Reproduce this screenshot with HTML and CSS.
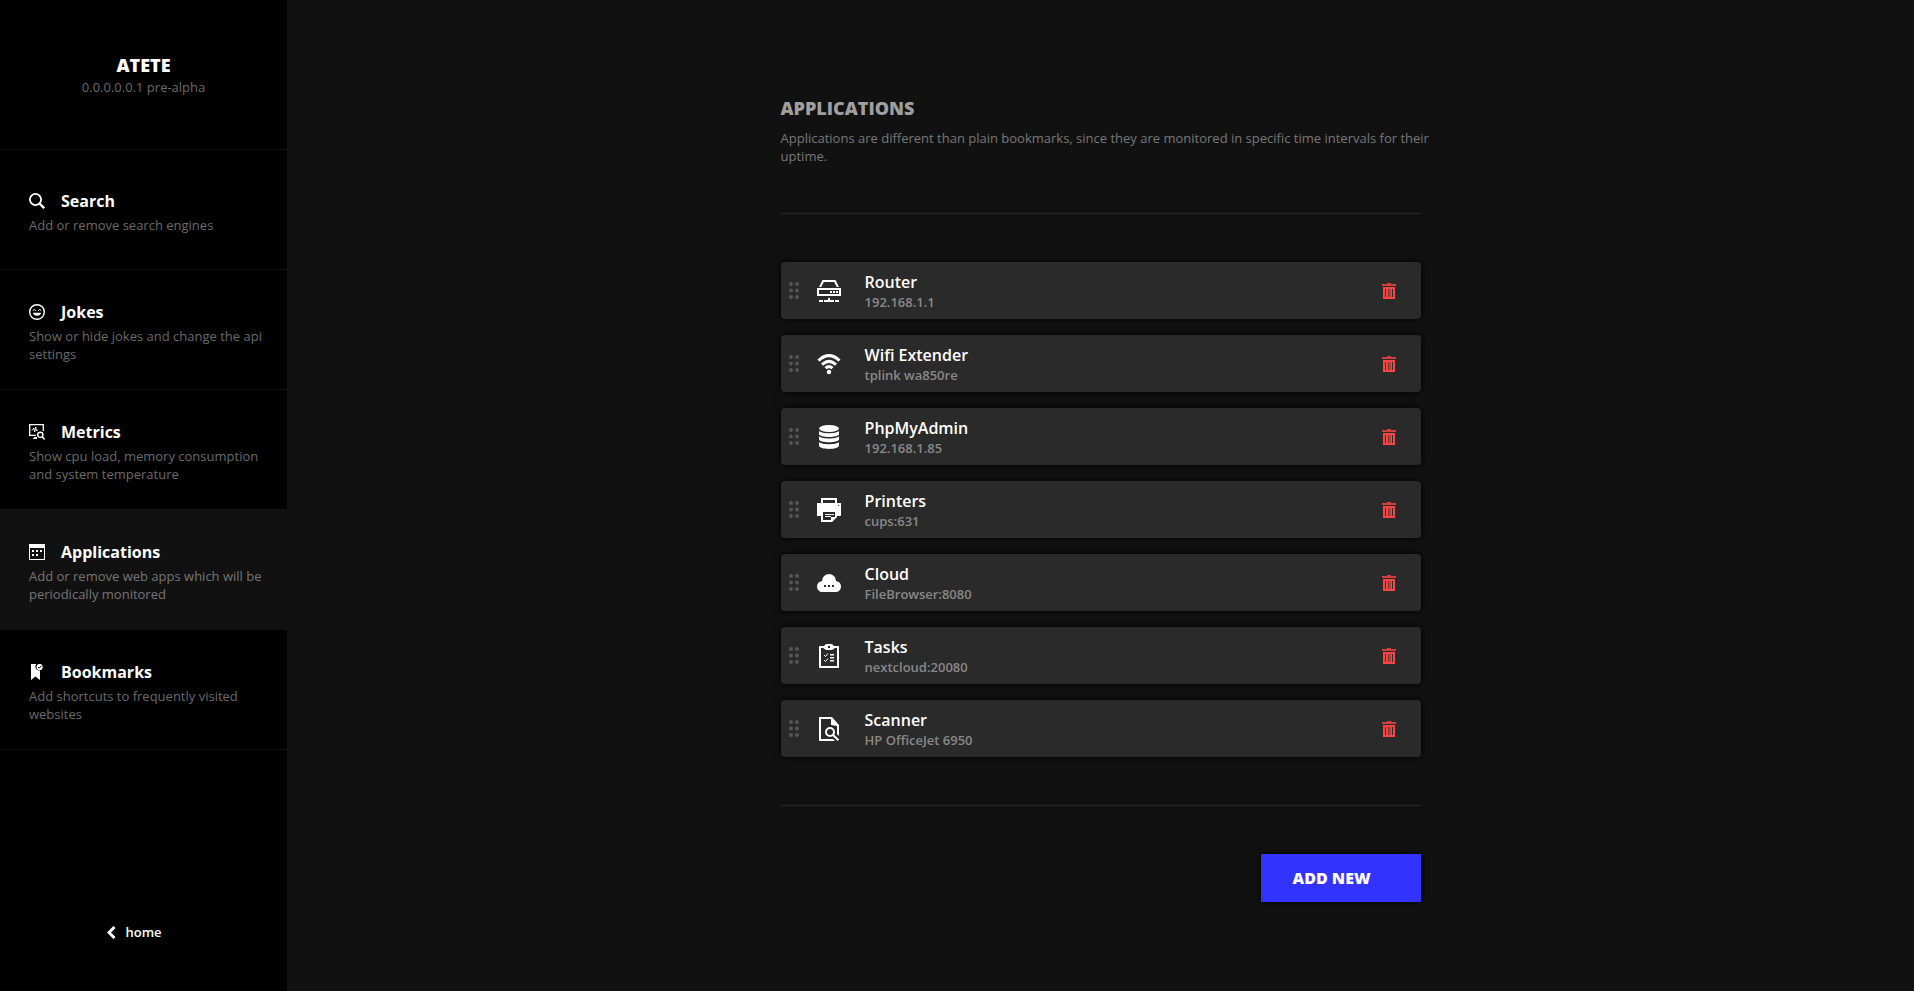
FILE: index.html
```html
<!DOCTYPE html>
<html lang="en">
<head>
<meta charset="utf-8">
<meta name="viewport" content="width=device-width, initial-scale=1">
<title>ATETE - Applications</title>
<link rel="stylesheet" href="styles.css">
</head>
<body>
<svg class="defs" aria-hidden="true">
  <symbol id="grip" viewBox="0 0 10 17"><circle cx="2" cy="2" r="2"/><circle cx="8" cy="2" r="2"/><circle cx="2" cy="8.500" r="2"/><circle cx="8" cy="8.500" r="2"/><circle cx="2" cy="15" r="2"/><circle cx="8" cy="15" r="2"/></symbol>
  <symbol id="trash" viewBox="0 0 14 16"><path d="M5 0h4v1h5v2H0V1h5z" opacity=".8"/><path fill-rule="evenodd" d="M1 4h12v12H1zM3 6v8h1V6zM6 6v8h.6V6zM7.700 6v8h.6V6zM10 6v8h1V6z"/></symbol>
</svg>
<div class="layout">
  <aside class="sidebar">
    <header class="brand">
      <h1 class="brand-name">ATETE</h1>
      <p class="brand-version">0.0.0.0.0.1 pre-alpha</p>
    </header>
    <nav class="menu">
      <a class="menu-item" href="#search">
        <span class="menu-title"><svg class="menu-icon" viewBox="0 0 16 16"><circle cx="6.500" cy="6.500" r="5.600" fill="none" stroke="currentColor" stroke-width="1.800"/><path d="m10.500 10.500 4.700 4.700" stroke="currentColor" stroke-width="2.400"/></svg>Search</span>
        <span class="menu-text">Add or remove search engines</span>
      </a>
      <a class="menu-item" href="#jokes">
        <span class="menu-title"><svg class="menu-icon" viewBox="0 0 16 16"><g fill="none" stroke="currentColor"><circle cx="8" cy="8" r="7.300" stroke-width="1.400"/><path d="M3.800 6.600Q5.300 4.600 6.800 6.600M9.200 6.600Q10.700 4.600 12.200 6.600" stroke-width="1"/></g><path d="M4 8.800h8c0 4-8 4-8 0z"/></svg>Jokes</span>
        <span class="menu-text">Show or hide jokes and change the api settings</span>
      </a>
      <a class="menu-item" href="#metrics">
        <span class="menu-title"><svg class="menu-icon" viewBox="0 0 16 16"><g fill="none" stroke="currentColor"><path d="M7 11.300H.7V.7h13.600V7" stroke-width="1.300"/><path d="M2.500 6h1.200l1-2 1 4 1-5 1 4 .8-1H9" stroke-width=".9"/><circle cx="11.300" cy="10.800" r="2.600" stroke-width="1.400"/><path d="m13.200 12.800 2.400 2.600" stroke-width="1.500"/></g><path d="M5.500 13H8v2H4v-.6z"/></svg>Metrics</span>
        <span class="menu-text">Show cpu load, memory consumption and system temperature</span>
      </a>
      <a class="menu-item menu-item-active" href="#applications" aria-current="page">
        <span class="menu-title"><svg class="menu-icon" viewBox="0 0 16 16"><path fill-rule="evenodd" d="M0 0h16v16H0zM1 4v11h14V4z"/><path d="M3 6h2v2H3zM7 6h2v2H7zM11 6h2v2h-2zM3 10h2v2H3zM7 10h2v2H7z"/></svg>Applications</span>
        <span class="menu-text">Add or remove web apps which will be periodically monitored</span>
      </a>
      <a class="menu-item" href="#bookmarks">
        <span class="menu-title"><svg class="menu-icon" viewBox="0 0 16 16"><path d="M2 0h5.200a4 4 0 0 0 3.800 6.500V16l-4.500-3.500L2 16z"/><circle cx="10.600" cy="3" r="3.100"/><path d="m9 3 1.200 1.200 2.100-2.300" fill="none" stroke="#000"/></svg>Bookmarks</span>
        <span class="menu-text">Add shortcuts to frequently visited websites</span>
      </a>
    </nav>
    <a class="home" href="#home"><svg class="home-icon" viewBox="0 0 9 13"><path d="M7.500 1 2 6.500 7.500 12" fill="none" stroke="currentColor" stroke-width="3"/></svg>home</a>
  </aside>
  <main class="main">
    <div class="content">
      <header class="intro">
        <h2 class="intro-title">APPLICATIONS</h2>
        <p class="intro-text">Applications are different than plain bookmarks, since they are monitored in specific time intervals for their uptime.</p>
      </header>
      <ul class="apps">
        <li class="app">
          <svg class="grip"><use href="#grip"/></svg>
          <svg class="app-icon" viewBox="0 0 24 24"><path fill-rule="evenodd" d="M5.500 1h13L22 8h-2.200l-2.600-5H6.800L4.200 8H2zM0 9h24v8H0zM2 11v4h20v-4zM13 12h2v2h-2zM16 12h2v2h-2zM19 12h2v2h-2zM11 19h2v2h4v2H7v-2h4zM2 21h4v2H2zM18 21h4v2h-4z"/></svg>
          <div class="app-label"><h3 class="app-name">Router</h3><p class="app-host">192.168.1.1</p></div>
          <button class="remove" type="button" aria-label="Delete Router"><svg class="trash"><use href="#trash"/></svg></button>
        </li>
        <li class="app">
          <svg class="grip"><use href="#grip"/></svg>
          <svg class="app-icon" viewBox="0 0 24 24"><g fill="none" stroke="currentColor" stroke-width="3"><path d="M1.500 8.700Q12-1.300 22.500 8.700M5 12.600Q12 6 19 12.600M8.500 16.200Q12 13 15.500 16.200"/></g><circle cx="12" cy="20" r="2.200"/></svg>
          <div class="app-label"><h3 class="app-name">Wifi Extender</h3><p class="app-host">tplink wa850re</p></div>
          <button class="remove" type="button" aria-label="Delete Wifi Extender"><svg class="trash"><use href="#trash"/></svg></button>
        </li>
        <li class="app">
          <svg class="grip"><use href="#grip"/></svg>
          <svg class="app-icon" viewBox="0 0 24 24"><ellipse cx="12" cy="3.500" rx="10" ry="3.500"/><path d="M2 6c3 3 17 3 20 0v3c0 4-20 4-20 0zM2 11.300c3 3 17 3 20 0v3c0 4-20 4-20 0zM2 17c3 3 17 3 20 0v3.500c0 4.500-20 4.500-20 0z"/></svg>
          <div class="app-label"><h3 class="app-name">PhpMyAdmin</h3><p class="app-host">192.168.1.85</p></div>
          <button class="remove" type="button" aria-label="Delete PhpMyAdmin"><svg class="trash"><use href="#trash"/></svg></button>
        </li>
        <li class="app">
          <svg class="grip"><use href="#grip"/></svg>
          <svg class="app-icon" viewBox="0 0 24 24"><path fill-rule="evenodd" d="M4 0h16v5h4v13h-4v1l-5 5H4v-6H0V5h4zM6 2v3h12V2zM21 7v1h1V7zM6 14v8h8v-3h4v-5zM8 16h9v1H8zM8 18h6v1H8z"/></svg>
          <div class="app-label"><h3 class="app-name">Printers</h3><p class="app-host">cups:631</p></div>
          <button class="remove" type="button" aria-label="Delete Printers"><svg class="trash"><use href="#trash"/></svg></button>
        </li>
        <li class="app">
          <svg class="grip"><use href="#grip"/></svg>
          <svg class="app-icon" viewBox="0 0 24 24"><path fill-rule="evenodd" d="M5 10a7 7 0 0 1 14 0c3 .6 5 2.500 5 5.500 0 3.500-2.500 5.500-5.500 5.500h-13C2.500 21 0 19 0 15.500 0 12.500 2 10.600 5 10zM7 14v2h2v-2zM11 14v2h2v-2zM15 14v2h2v-2z"/></svg>
          <div class="app-label"><h3 class="app-name">Cloud</h3><p class="app-host">FileBrowser:8080</p></div>
          <button class="remove" type="button" aria-label="Delete Cloud"><svg class="trash"><use href="#trash"/></svg></button>
        </li>
        <li class="app">
          <svg class="grip"><use href="#grip"/></svg>
          <svg class="app-icon" viewBox="0 0 24 24"><path fill-rule="evenodd" d="M2 2h5l2-2h6l2 2h5v22H2zM4 4v18h16V4h-2l-3 2H9L6 4zM11 2v2h2V2z"/><path d="M13 10h4v1.500h-4zM13 13h4v1.500h-4zM13 16h4v1.500h-4z"/><path d="m7 11 1.500 1.500 2.500-3M7 16l1.500 1.500 2.500-3" fill="none" stroke="currentColor"/></svg>
          <div class="app-label"><h3 class="app-name">Tasks</h3><p class="app-host">nextcloud:20080</p></div>
          <button class="remove" type="button" aria-label="Delete Tasks"><svg class="trash"><use href="#trash"/></svg></button>
        </li>
        <li class="app">
          <svg class="grip"><use href="#grip"/></svg>
          <svg class="app-icon" viewBox="0 0 24 24"><path d="M2 0h13l7 8v11l-2-2V9l-6-1V2H4v20h12l2 2H2z"/><path d="M14 2v6h6z"/><circle cx="13" cy="15" r="4" fill="none" stroke="currentColor" stroke-width="2"/><path d="m15.500 17.500 6 5.800" stroke="currentColor" stroke-width="2"/></svg>
          <div class="app-label"><h3 class="app-name">Scanner</h3><p class="app-host">HP OfficeJet 6950</p></div>
          <button class="remove" type="button" aria-label="Delete Scanner"><svg class="trash"><use href="#trash"/></svg></button>
        </li>
      </ul>
      <div class="actions"><button class="add" type="button">ADD NEW</button></div>
    </div>
  </main>
</div>
</body>
</html>
```
FILE: styles.css
```css
* { box-sizing: border-box; }
body, h1, h2, h3, p, ul { margin: 0; padding: 0; }
body {
  background: #111;
  color: #fff;
  font: 13px/18px "Open Sans", "Noto Sans", sans-serif;
}
a { color: inherit; text-decoration: none; }
svg { fill: currentColor; flex: none; }
.defs { display: none; }

.layout { display: grid; grid-template-columns: 15% 1fr; min-height: 100vh; }

.sidebar { display: flex; flex-direction: column; background: #000; }
.brand {
  display: flex;
  flex-direction: column;
  align-items: center;
  gap: 1px;
  padding: 53px 16px;
  border-bottom: 1px solid #111;
}
.brand-name { font-size: 18px; line-height: 24px; font-weight: 800; }
.brand-version { color: #6a6a6a; }
.menu-item {
  display: flex;
  flex-direction: column;
  justify-content: center;
  gap: 4px;
  min-height: 120px;
  padding: 4px 20px 0 29px;
  border-bottom: 1px solid #111;
}
.menu-item-active { background: #111; }
.menu-title {
  display: flex;
  align-items: center;
  gap: 16px;
  font-size: 16px;
  line-height: 22px;
  font-weight: 700;
}
.menu-icon { width: 16px; height: 16px; }
.menu-text { color: #6a6a6a; }
.menu-item-active .menu-text { color: #757575; }
.home {
  display: flex;
  align-items: center;
  justify-content: center;
  gap: 10px;
  margin: auto 0 50px;
  padding-right: 19px;
  font-weight: 600;
}
.home-icon { width: 9px; height: 13px; }

.main {
  display: flex;
  align-items: center;
  justify-content: center;
  padding: 48px;
}
.content { width: 100%; max-width: 640px; }
.intro { padding-bottom: 48px; border-bottom: 1px solid #2a2a2a; }
.intro-title { padding: 7px 0 9px; color: #9f9f9f; font-size: 18px; line-height: 24px; font-weight: 800; }
.intro-text { margin-right: -16px; color: #777; }
.apps {
  display: grid;
  gap: 16px;
  padding: 48px 0;
  border-bottom: 1px solid #2a2a2a;
  list-style: none;
}
.app {
  display: flex;
  align-items: center;
  min-height: 57px;
  padding: 8px 24px 8px 8px;
  border-radius: 4px;
  background: #2a2a2a;
  box-shadow: 0 0 6px #000;
}
.grip { width: 10px; height: 17px; margin-right: 18px; color: #555; }
.app-icon { width: 24px; height: 24px; margin-right: 24px; }
.app-label { flex: 1; }
.app-name { font-size: 16px; line-height: 22px; font-weight: 600; }
.app-host { color: #888; font-weight: 600; }
.remove {
  display: flex;
  padding: 0 1px;
  border: 0;
  background: none;
  color: #ff4343;
  cursor: pointer;
}
.trash { width: 14px; height: 16px; }
.actions { display: flex; justify-content: flex-end; padding-top: 48px; }
.add {
  width: 160px;
  height: 48px;
  padding: 0 32px;
  border: 0;
  background: #33f;
  box-shadow: 0 0 6px #000;
  color: #fff;
  font: 800 16px/22px "Open Sans", "Noto Sans", sans-serif;
  text-align: left;
  cursor: pointer;
}
```
